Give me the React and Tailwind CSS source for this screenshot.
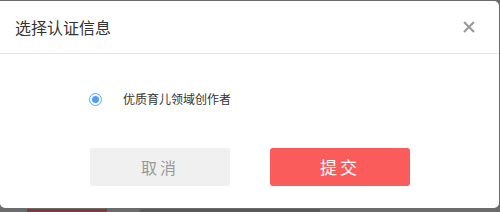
import React from "react";

const font = { fontFamily: '"Noto Sans CJK SC", "Noto Sans", sans-serif' };

export default function App() {
  return (
    <div className="relative w-[500px] h-[212px] overflow-hidden bg-[#6b6b6b]" style={font}>
      {/* page behind the overlay */}
      <div className="absolute left-0 top-[209px] w-full h-[3px] flex items-start">
        <span className="ml-[27px] w-[80px] h-[3px] bg-[#7d3b3b]"></span>
        <span className="ml-[33px] w-[180px] h-[3px] bg-[#595959]"></span>
      </div>

      <div className="absolute left-0 top-[1px] w-[499px] h-[207px] bg-white rounded-[5px] rounded-tl-none flex flex-col">
        <div className="h-[53px] flex items-center justify-between pl-[15px] pr-[24px] border-b border-[#e6e6e6]">
          <h2 className="text-[16px] text-[#333] leading-none">选择认证信息</h2>
          <svg width="12" height="12" viewBox="0 0 12 12" aria-label="close">
            <path d="M1 1L11 11M11 1L1 11" stroke="#999" strokeWidth="2" />
          </svg>
        </div>

        <div className="flex items-center pl-[89px] mt-[38px] h-[14px]">
          <span className="w-[13px] h-[13px] rounded-full border border-[#5ca6f6] flex items-center justify-center">
            <span className="w-[7px] h-[7px] rounded-full bg-[#4f9df5]"></span>
          </span>
          <span className="ml-[21px] text-[12px] text-[#333] leading-none">优质育儿领域创作者</span>
        </div>

        <div className="flex pl-[90px] gap-[40px] mt-[42px]">
          <button type="button" className="w-[140px] h-[38px] rounded-[3px] bg-[#f0f0f0] text-[#999] text-[16px] tracking-[3px]">
            取消
          </button>
          <button type="button" className="w-[140px] h-[38px] rounded-[3px] bg-[#fa5c5c] text-white text-[17px] tracking-[3px]">
            提交
          </button>
        </div>
      </div>
    </div>
  );
}
